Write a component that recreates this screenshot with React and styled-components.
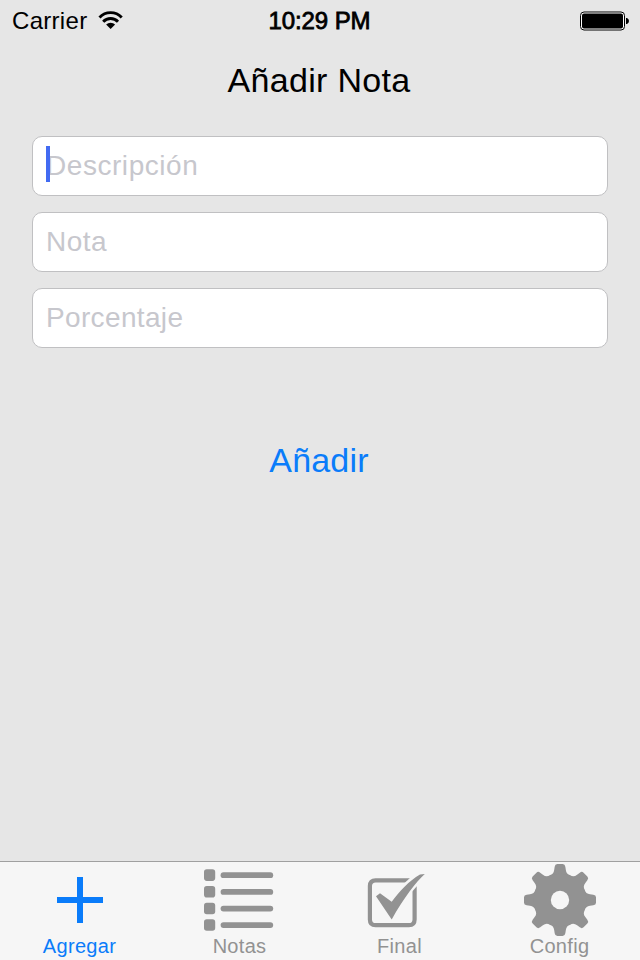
import React from 'react'
import styled, { createGlobalStyle } from 'styled-components';

const GlobalStyle = createGlobalStyle`
    * {
        box-sizing: border-box;
    }

    body {
        margin: 0;
        background: #e6e6e6;
        font-family: "Liberation Sans", Arial, sans-serif;
    }
`;

const Screen = styled.div`
    display: flex;
    flex-direction: column;
    width: 640px;
    height: 960px;
    background: #e6e6e6;
    overflow: hidden;
`;

const StatusBar = styled.header`
    display: grid;
    grid-template-columns: 1fr auto 1fr;
    align-items: center;
    height: 41px;
    padding: 0 11px 0 12px;
    font-size: 24px;
    line-height: 41px;
    color: #000;
`;

const Carrier = styled.div`
    display: flex;
    align-items: center;
    gap: 11px;
    letter-spacing: 0.3px;
`;

const Clock = styled.div`
    margin-right: 2px;
    letter-spacing: -0.1px;
    -webkit-text-stroke: 0.8px #000;
`;

const Wifi = styled.svg`
    margin-bottom: 2px;
`;

const Battery = styled.svg`
    justify-self: end;
`;

const Content = styled.main`
    flex: 1;
    display: flex;
    flex-direction: column;
    align-items: center;
    padding: 19px 32px 0;
`;

const Title = styled.h1`
    margin: 0 2px 36px 0;
    font-size: 34px;
    font-weight: 400;
    line-height: 40px;
    letter-spacing: 0.3px;
    color: #000;
`;

const Form = styled.form`
    display: flex;
    flex-direction: column;
    gap: 16px;
    width: 100%;
`;

const Field = styled.label`
    position: relative;
    display: flex;
    height: 60px;
    border: 1px solid #c0c0c2;
    border-radius: 10px;
    background: #fff;
`;

const Input = styled.input`
    flex: 1;
    padding: 0 13px;
    border: 0;
    outline: 0;
    background: none;
    font-family: inherit;
    font-size: 28px;
    letter-spacing: ${({ $spacing }) => $spacing}px;

    &::placeholder {
        color: #c7c7cd;
        opacity: 1;
    }
`;

const Caret = styled.span`
    position: absolute;
    top: 9px;
    left: 13px;
    width: 4px;
    height: 36px;
    background: #426bf2;
`;

const AddButton = styled.button`
    align-self: center;
    margin: 76px 2px 0 0;
    padding: 0;
    border: 0;
    background: none;
    font-family: inherit;
    font-size: 34px;
    line-height: 40px;
    letter-spacing: 0.2px;
    color: #0a7cfa;
`;

const TabBar = styled.nav`
    display: grid;
    grid-template-columns: repeat(4, 1fr);
    height: 99px;
    border-top: 1px solid #a0a0a0;
    background: #f6f6f6;
`;

const Tab = styled.a`
    display: flex;
    flex-direction: column;
    align-items: center;
    padding-top: 1px;
    color: ${({ $active }) => ($active ? '#0a7cfa' : '#929292')};
`;

const TabIcon = styled.svg`
    display: block;
    fill: currentColor;
`;

const TabLabel = styled.span`
    font-size: 20px;
    line-height: 20px;
    letter-spacing: 0.3px;
    margin: -1px 1px 0 0;
`;

const WifiIcon = () => (
    <Wifi width="25" height="18" viewBox="-.6 0 25 18" fill="none" stroke="#000" strokeWidth="2.9">
        <path d="M.9 6.4A15.2 15.2 0 0 1 23.1 6.4" />
        <path d="M4.6 10.8A10 10 0 0 1 19.4 10.8" />
        <path d="M12 18L7.5 13.6A6.4 6.4 0 0 1 16.5 13.6Z" fill="#000" stroke="none" />
    </Wifi>
);

const BatteryIcon = () => (
    <Battery width="49" height="20" viewBox="0 0 49 20">
        <rect x=".5" y="1" width="44" height="18" rx="3.5" fill="#fff" stroke="#000" />
        <rect x="2" y="2.4" width="41" height="15.2" rx="2" fill="#000" />
        <path d="M46 7h1q2 1 2 3t-2 3h-1z" />
    </Battery>
);

const TOOTH = 'M0 0L-31 -74Q-19 -77 -17.5 -90L-16 -100Q-15 -108 -8 -108H8Q15 -108 16 -100L17.5 -90Q19 -77 31 -74Z';

const AddIcon = () => (
    <TabIcon width="74" height="74" viewBox="0 0 74 74">
        <path d="M34 14h6v20h20v6H40v20h-6V40H14v-6h20z" />
    </TabIcon>
);

const ListIcon = () => (
    <TabIcon width="74" height="74" viewBox="0 0 74 74">
        {[6.3, 23, 39.7, 56.2].map((y) => (
            <g key={y}>
                <rect x="1" y={y} width="11.2" height="11.6" rx="2.8" />
                <rect x="17.6" y={y + 3} width="52.6" height="5.8" rx="2.9" />
            </g>
        ))}
    </TabIcon>
);

const CheckIcon = () => (
    <TabIcon width="74" height="74" viewBox="0 0 74 74">
        <path
            d="M48 17.3H12.6Q6.9 17.3 6.9 23V56.4Q6.9 62.1 12.6 62.1H45.9Q51.6 62.1 51.6 56.4V22"
            fill="none"
            stroke="currentColor"
            strokeWidth="4.2"
        />
        <path d="M47.5 14.5L41 20.5L46 32L54.5 22.5V14.5Z" fill="#f6f6f6" />
        <path d="M13 33.2L17 30.2L28.7 38.7C37 28 46 18 57 11.6L61.8 11C52.5 19.5 41.5 34 28.7 56.4Z" />
    </TabIcon>
);

const GearIcon = () => (
    <TabIcon width="74" height="74" viewBox="-111 -111 222 222">
        {[0, 45, 90, 135, 180, 225, 270, 315].map((angle) => (
            <path key={angle} d={TOOTH} transform={`rotate(${angle})`} />
        ))}
        <circle r="79" />
        <circle r="27.5" fill="#f6f6f6" />
    </TabIcon>
);

const fields = [
    { name: 'Descripción', spacing: 0.55 },
    { name: 'Nota', spacing: 0.5 },
    { name: 'Porcentaje', spacing: 0.35 },
];

const tabs = [
    { label: 'Agregar', Icon: AddIcon },
    { label: 'Notas', Icon: ListIcon },
    { label: 'Final', Icon: CheckIcon },
    { label: 'Config', Icon: GearIcon },
];

const App = () => {
    return (
        <Screen>
            <GlobalStyle />
            <StatusBar>
                <Carrier>
                    Carrier
                    <WifiIcon />
                </Carrier>
                <Clock>10:29 PM</Clock>
                <BatteryIcon />
            </StatusBar>
            <Content>
                <Title>Añadir Nota</Title>
                <Form>
                    {fields.map(({ name, spacing }, i) => (
                        <Field key={name}>
                            <Input placeholder={name} $spacing={spacing} />
                            {i === 0 && <Caret />}
                        </Field>
                    ))}
                    <AddButton type="button">Añadir</AddButton>
                </Form>
            </Content>
            <TabBar>
                {tabs.map(({ label, Icon }, i) => (
                    <Tab key={label} $active={i === 0}>
                        <Icon />
                        <TabLabel>{label}</TabLabel>
                    </Tab>
                ))}
            </TabBar>
        </Screen>
    )
}

export default App
